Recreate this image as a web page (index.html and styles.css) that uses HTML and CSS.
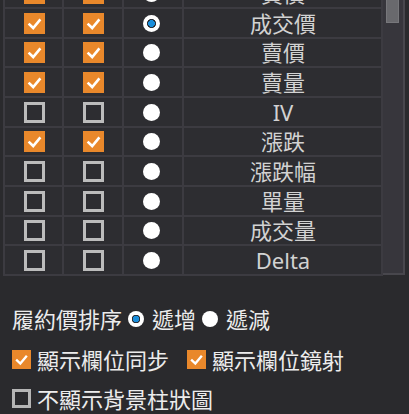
FILE: index.html
```html
<!DOCTYPE html>
<html lang="zh-Hant">
<head>
<meta charset="utf-8">
<link rel="stylesheet" href="styles.css">
</head>
<body>
<div class="panel">
  <div class="table">
    <div class="rows">
      <div class="row">
        <div class="cell"><span class="cb on"><svg viewBox="0 0 21 21"><path d="M4.6 10.6 L9.2 15 L16.4 6.4"/></svg></span></div>
        <div class="cell"><span class="cb on"><svg viewBox="0 0 21 21"><path d="M4.6 10.6 L9.2 15 L16.4 6.4"/></svg></span></div>
        <div class="cell"><span class="rd"></span></div>
        <div class="cell name">買價</div>
      </div>
      <div class="row">
        <div class="cell"><span class="cb on"><svg viewBox="0 0 21 21"><path d="M4.6 10.6 L9.2 15 L16.4 6.4"/></svg></span></div>
        <div class="cell"><span class="cb on"><svg viewBox="0 0 21 21"><path d="M4.6 10.6 L9.2 15 L16.4 6.4"/></svg></span></div>
        <div class="cell"><span class="rd sel"></span></div>
        <div class="cell name">成交價</div>
      </div>
      <div class="row">
        <div class="cell"><span class="cb on"><svg viewBox="0 0 21 21"><path d="M4.6 10.6 L9.2 15 L16.4 6.4"/></svg></span></div>
        <div class="cell"><span class="cb on"><svg viewBox="0 0 21 21"><path d="M4.6 10.6 L9.2 15 L16.4 6.4"/></svg></span></div>
        <div class="cell"><span class="rd"></span></div>
        <div class="cell name">賣價</div>
      </div>
      <div class="row">
        <div class="cell"><span class="cb on"><svg viewBox="0 0 21 21"><path d="M4.6 10.6 L9.2 15 L16.4 6.4"/></svg></span></div>
        <div class="cell"><span class="cb on"><svg viewBox="0 0 21 21"><path d="M4.6 10.6 L9.2 15 L16.4 6.4"/></svg></span></div>
        <div class="cell"><span class="rd"></span></div>
        <div class="cell name">賣量</div>
      </div>
      <div class="row">
        <div class="cell"><span class="cb"></span></div>
        <div class="cell"><span class="cb"></span></div>
        <div class="cell"><span class="rd"></span></div>
        <div class="cell name">IV</div>
      </div>
      <div class="row">
        <div class="cell"><span class="cb on"><svg viewBox="0 0 21 21"><path d="M4.6 10.6 L9.2 15 L16.4 6.4"/></svg></span></div>
        <div class="cell"><span class="cb on"><svg viewBox="0 0 21 21"><path d="M4.6 10.6 L9.2 15 L16.4 6.4"/></svg></span></div>
        <div class="cell"><span class="rd"></span></div>
        <div class="cell name">漲跌</div>
      </div>
      <div class="row">
        <div class="cell"><span class="cb"></span></div>
        <div class="cell"><span class="cb"></span></div>
        <div class="cell"><span class="rd"></span></div>
        <div class="cell name">漲跌幅</div>
      </div>
      <div class="row">
        <div class="cell"><span class="cb"></span></div>
        <div class="cell"><span class="cb"></span></div>
        <div class="cell"><span class="rd"></span></div>
        <div class="cell name">單量</div>
      </div>
      <div class="row">
        <div class="cell"><span class="cb"></span></div>
        <div class="cell"><span class="cb"></span></div>
        <div class="cell"><span class="rd"></span></div>
        <div class="cell name">成交量</div>
      </div>
      <div class="row">
        <div class="cell"><span class="cb"></span></div>
        <div class="cell"><span class="cb"></span></div>
        <div class="cell"><span class="rd"></span></div>
        <div class="cell name">Delta</div>
      </div>
    </div>
  </div>
  <div class="scrollbar"><div class="thumb"></div></div>
</div>

<div class="options">
  <div class="opt-row r1">
    <span class="label">履約價排序</span>
    <span class="orad sel"></span>
    <span class="label">遞增</span>
    <span class="orad"></span>
    <span class="label">遞減</span>
  </div>
  <div class="opt-row r2">
    <span class="ocb on"><svg viewBox="0 0 21 21"><path d="M4.6 10.6 L9.2 15 L16.4 6.4"/></svg></span>
    <span class="label">顯示欄位同步</span>
    <span class="ocb on second"><svg viewBox="0 0 21 21"><path d="M4.6 10.6 L9.2 15 L16.4 6.4"/></svg></span>
    <span class="label">顯示欄位鏡射</span>
  </div>
  <div class="opt-row r3">
    <span class="ocb"></span>
    <span class="label">不顯示背景柱狀圖</span>
  </div>
</div>
</body>
</html>
```

FILE: styles.css
```css
* { box-sizing: border-box; }

html, body {
  margin: 0;
  padding: 0;
}

body {
  width: 409px;
  height: 414px;
  overflow: hidden;
  background: #2a2a2d;
  font-family: "Noto Sans", "Noto Sans CJK TC", sans-serif;
  color: #e6e6e6;
}

.panel {
  display: flex;
  height: 276px;
  margin-left: 3px;
}

.table {
  width: 380px;
  height: 276px;
  overflow: hidden;
  border-left: 2px solid #3c3b41;
}

.rows {
  margin-top: -20.667px;
}

.row {
  display: grid;
  grid-template-columns: 59px 60px 60px 199px;
  height: calc(89px / 3);
  background: #2d2d31;
}

.cell {
  display: flex;
  align-items: center;
  justify-content: center;
  border-right: 2px solid #3c3b41;
  border-bottom: 2px solid #3c3b41;
}

.name {
  font-size: 22px;
  color: #d2d2d2;
  line-height: 1;
  font-family: "Noto Sans", "Noto Sans CJK TC", sans-serif;
  padding-left: 1px;
}

.cb {
  display: block;
  width: 21px;
  height: 21px;
  border: 3px solid #bcbcbc;
  margin-left: 1px;
  margin-top: 1px;
}

.cb.on {
  border: none;
  background: #e9882b;
}

.cb svg, .ocb svg {
  display: block;
  width: 100%;
  height: 100%;
  fill: none;
  stroke: #ffffff;
  stroke-width: 2.6;
}

.rd {
  display: block;
  width: 17px;
  height: 17px;
  border-radius: 50%;
  background: #ffffff;
  margin-right: 4px;
  margin-top: 1px;
}

.rd.sel {
  background: radial-gradient(circle, #1a8edb 0 3.4px, #27303a 3.4px 4.4px, #ffffff 4.6px);
}

.scrollbar {
  width: 22px;
  height: 275px;
  background: #37363c;
  border-right: 2px solid #48474d;
  border-bottom: 2px solid #48474d;
  padding-left: 3px;
}

.thumb {
  width: 13px;
  height: 23px;
  background: #69696d;
  border: 1px solid #77777b;
  border-top: none;
}

.options {
  padding: 22px 0 0 12px;
}

.opt-row {
  display: flex;
  align-items: center;
}

.r1 { height: 40px; }
.r2 { height: 41px; }
.r3 { height: 37px; }

.label {
  font-family: "Noto Sans CJK TC", sans-serif;
  font-size: 22px;
  line-height: 1;
  color: #ececec;
  letter-spacing: 0;
}

.orad {
  display: block;
  width: 16px;
  height: 16px;
  border-radius: 50%;
  background: #ffffff;
  margin: 2px 8px 0 6px;
}

.orad.sel {
  background: radial-gradient(circle, #1a8edb 0 3.2px, #27303a 3.2px 4.2px, #ffffff 4.4px);
}

.ocb {
  display: block;
  width: 19px;
  height: 19px;
  border: 3px solid #b5b5b5;
  margin-right: 6px;
  margin-top: 2px;
}

.ocb.on {
  border: none;
  background: #e9882b;
}

.ocb.second {
  margin-left: 18px;
}
```
